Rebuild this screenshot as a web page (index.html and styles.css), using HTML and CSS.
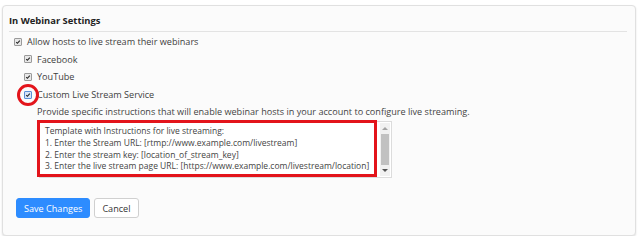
FILE: index.html
```html
<!DOCTYPE html>
<html lang="en">
<head>
<meta charset="UTF-8">
<title>In Webinar Settings</title>
<link rel="stylesheet" href="styles.css">
</head>
<body>
<div class="panel">
    <div class="panel-head">In Webinar Settings</div>
    <div class="panel-body">
        <div class="row">
            <span class="cb"><svg viewBox="0 0 8 8"><path d="M1.6 4.2 L3.2 5.8 L6.4 2.2" /></svg></span>
            <span>Allow hosts to live stream their webinars</span>
        </div>
        <div class="sub">
            <div class="row">
                <span class="cb"><svg viewBox="0 0 8 8"><path d="M1.6 4.2 L3.2 5.8 L6.4 2.2" /></svg></span>
                <span>Facebook</span>
            </div>
            <div class="row">
                <span class="cb"><svg viewBox="0 0 8 8"><path d="M1.6 4.2 L3.2 5.8 L6.4 2.2" /></svg></span>
                <span>YouTube</span>
            </div>
            <div class="row">
                <span class="cb focused"><svg viewBox="0 0 8 8"><path d="M1.6 4.2 L3.2 5.8 L6.4 2.2" /></svg><span class="mark-circle"></span></span>
                <span>Custom Live Stream Service</span>
            </div>
            <div class="desc">Provide specific instructions that will enable webinar hosts in your account to configure live streaming.</div>
            <div class="ta">
                <div class="ta-text">Template with Instructions for live streaming:<br>1. Enter the Stream URL: [rtmp://www.example.com/livestream]<br>2. Enter the stream key: [location_of_stream_key]<br>3. Enter the live stream page URL: [https://www.example.com/livestream/location]</div>
                <div class="scrollbar">
                    <span class="arrow up"></span>
                    <span class="thumb"></span>
                    <span class="arrow down"></span>
                </div>
                <span class="mark-box"></span>
            </div>
        </div>
        <div class="actions">
            <button class="btn btn-primary">Save Changes</button>
            <button class="btn">Cancel</button>
        </div>
    </div>
</div>
</body>
</html>
```

FILE: styles.css
```css
body {
    margin: 0;
    background: #fff;
    font-family: 'Open Sans', 'Liberation Sans', sans-serif;
    color: #3d3d3d;
}
.panel {
    margin: 5px 4px 0 2px;
    height: 229px;
    background: #fbfbfb;
    border: 1px solid #e0e0e0;
    border-radius: 4px;
    box-shadow: 0 1px 2px rgba(0,0,0,0.12);
}
.panel-head {
    margin: 0 8px 0 6px;
    padding-top: 8px;
    height: 17px;
    line-height: 14px;
    font-size: 9.4px;
    font-weight: bold;
    color: #222;
    border-bottom: 1px solid #e3e3e3;
}
.panel-body {
    padding: 1px 0 0 11px;
    font-size: 9.1px;
}
.row {
    display: flex;
    align-items: center;
    height: 17.6px;
    gap: 5px;
}
.cb {
    position: relative;
    width: 6px;
    height: 6px;
    border: 1px solid #9a9a9a;
    border-radius: 1px;
    background: #e8e8e8;
    flex: none;
}
.cb svg {
    display: block;
    width: 6px;
    height: 6px;
    fill: none;
    stroke: #222;
    stroke-width: 1.4;
}
.cb.focused {
    border-color: #5b8fd6;
    background: #d6e4f7;
}
.mark-circle {
    position: absolute;
    left: -8px;
    top: -8px;
    width: 16px;
    height: 16px;
    border: 3px solid #e3141b;
    border-radius: 50%;
}
.sub {
    padding-left: 10px;
}
.desc {
    padding-left: 13px;
    height: 18px;
    line-height: 18px;
    color: #444;
}
.ta {
    position: relative;
    display: flex;
    margin: 0 0 0 15px;
    width: 351px;
    height: 55px;
    background: #fff;
    border: 1px solid #dcdcdc;
}
.ta-text {
    flex: 1;
    min-width: 0;
    overflow: hidden;
    padding: 3px 0 0 5px;
    font-size: 8.5px;
    line-height: 11.6px;
    color: #444;
    white-space: nowrap;
}
.scrollbar {
    display: flex;
    flex-direction: column;
    align-items: center;
    width: 10px;
    margin: 1px 1px 1px 0;
    background: #f1f1f1;
}
.arrow {
    width: 0;
    height: 0;
    border-left: 3px solid transparent;
    border-right: 3px solid transparent;
    margin: 4px 0;
}
.arrow.up {
    border-bottom: 3px solid #a3a3a3;
}
.arrow.down {
    border-top: 3px solid #555;
}
.thumb {
    flex: 1;
    width: 8px;
    background: #c1c1c1;
}
.mark-box {
    position: absolute;
    left: -3px;
    top: -2px;
    width: 334px;
    height: 51px;
    border: 3px solid #e3141b;
}
.actions {
    display: flex;
    gap: 4px;
    margin-top: 20px;
    padding-left: 2px;
}
.btn {
    height: 20px;
    padding: 0 7px;
    font-family: inherit;
    font-size: 9.1px;
    color: #333;
    background: #fff;
    border: 1px solid #d0d0d0;
    border-radius: 3px;
}
.btn-primary {
    color: #fff;
    background: #2d8cff;
    border-color: #2d8cff;
}
```
